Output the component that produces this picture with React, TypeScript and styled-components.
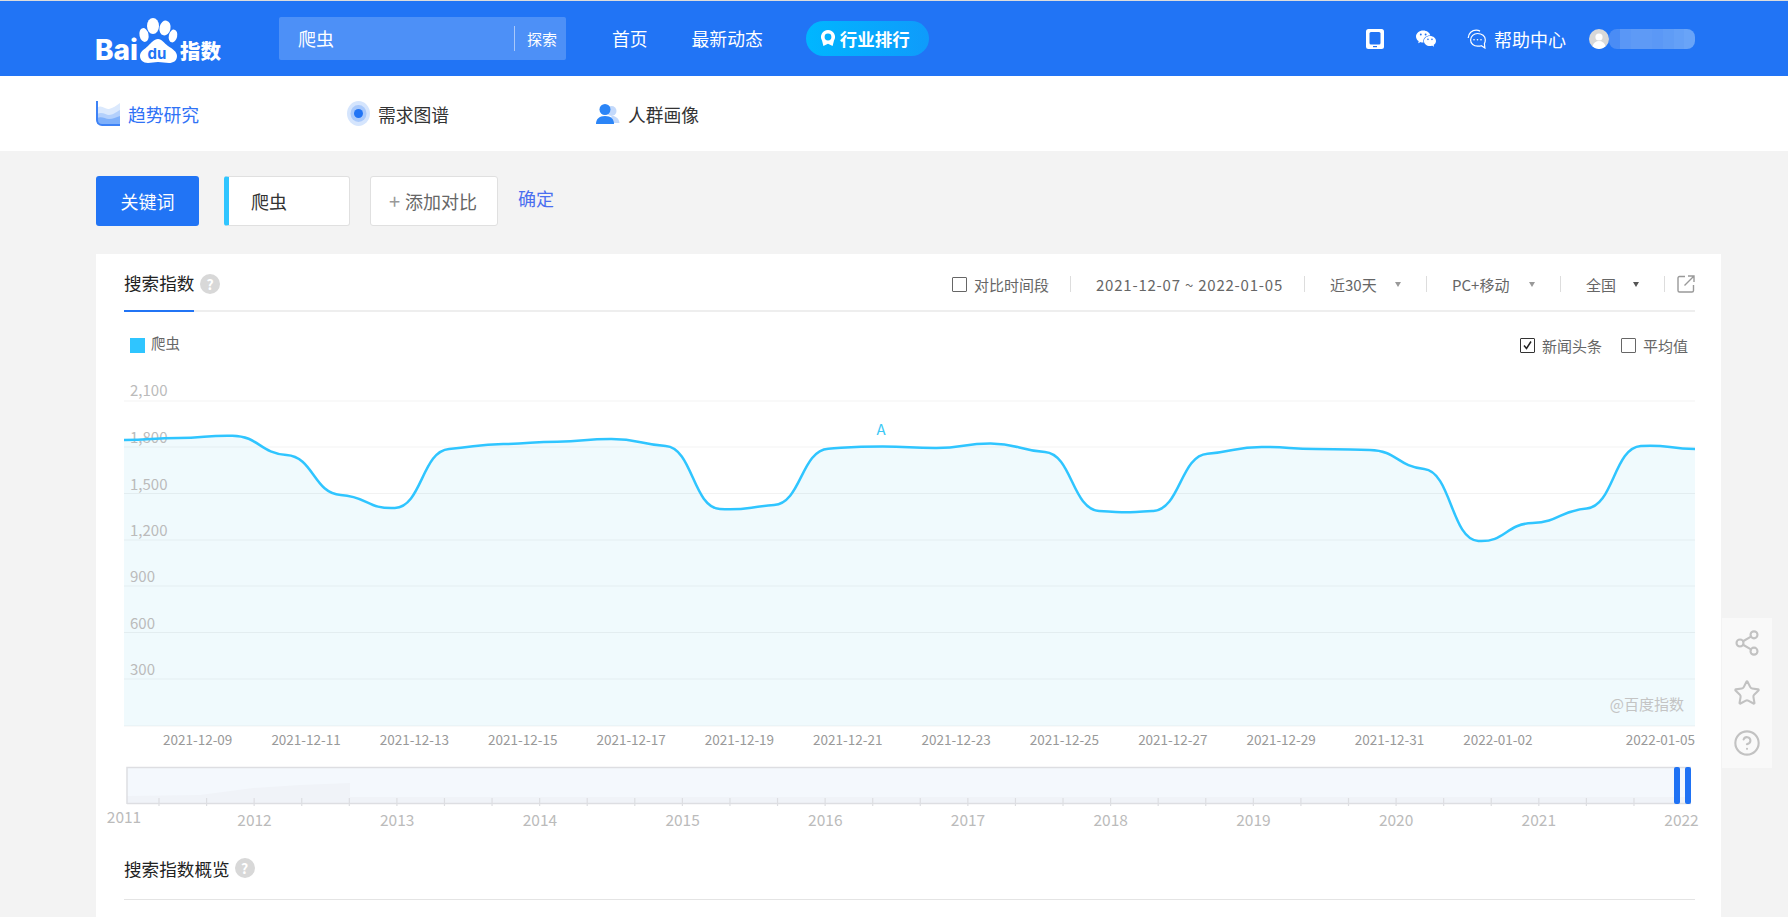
import React from "react";
import styled, { createGlobalStyle } from "styled-components";
import { Share2, Star, CircleHelp } from "lucide-react";
import { IoLogoWechat } from "react-icons/io5";

const BLUE = "#2174f5";
const FONT = `"Noto Sans CJK SC", "Noto Sans", sans-serif`;

const Global = createGlobalStyle`
  html, body { margin: 0; padding: 0; height: 100%; overflow: hidden; background: #f3f3f3; font-family: ${FONT}; }
  * { box-sizing: border-box; }
`;

const Page = styled.div`
  position: relative;
  height: 917px;
  display: flex;
  flex-direction: column;
  overflow: hidden;
`;
const Header = styled.header`
  height: 76px;
  border-top: 1px solid #dcdcdc;
  background: ${BLUE};
  padding: 0 93px 0 96px;
  display: flex;
  align-items: center;
  color: #fff;
  flex: none;
`;
const LogoSvg = styled.svg`
  width: 125px;
  height: 50px;
  align-self: flex-start;
  margin: 15px 58px 0 0;
  flex: none;
  overflow: visible;
`;
const SearchBox = styled.div`
  width: 287px;
  height: 43px;
  margin-top: -1px;
  background: #4d90f7;
  border-radius: 2px;
  display: flex;
  align-items: center;
  padding-left: 19px;
  font-size: 18px;
`;
const SearchText = styled.span`
  flex: 1;
`;
const SearchBtn = styled.span`
  width: 52px;
  height: 25px;
  border-left: 1px solid #a9c8fa;
  font-size: 15px;
  line-height: 25px;
  padding-left: 12px;
`;
const NavLink = styled.a<{ $ml: number }>`
  font-size: 17.8px;
  margin-left: ${(p) => p.$ml}px;
  white-space: nowrap;
  margin-top: -1px;
`;
const Pill = styled.div`
  width: 123px;
  height: 35px;
  margin: -1px 0 0 43px;
  border-radius: 18px;
  background: linear-gradient(90deg, #00b6ff, #0f9bfb);
  display: flex;
  align-items: center;
  padding-left: 13px;
  gap: 3px;
  font-size: 17.5px;
  font-weight: 700;
  white-space: nowrap;
`;
const HeaderRight = styled.div`
  margin-left: auto;
  display: flex;
  align-items: center;
  height: 100%;
`;
const IconSlot = styled.span<{ $w: number; $mr: number }>`
  width: ${(p) => p.$w}px;
  margin-right: ${(p) => p.$mr}px;
  display: flex;
  justify-content: center;
  flex: none;
`;
const HelpText = styled.span`
  font-size: 18px;
  margin-right: 23px;
  white-space: nowrap;
`;
const Blur = styled.div`
  display: flex;
  height: 20px;
  width: 86px;
  border-radius: 8px;
  overflow: hidden;
  filter: blur(0.6px);
`;
const BlurCell = styled.span<{ $c: string }>`
  flex: 1;
  background: ${(p) => p.$c};
`;

const SubNav = styled.nav`
  height: 75px;
  background: #fff;
  padding-left: 96px;
  display: flex;
  align-items: center;
  flex: none;
`;
const SubItem = styled.a<{ $w: number; $active?: boolean }>`
  width: ${(p) => p.$w}px;
  display: flex;
  align-items: center;
  font-size: 17.8px;
  color: ${(p) => (p.$active ? "#3072f6" : "#333")};
  gap: 8px;
`;

const Main = styled.main`
  flex: 1;
  min-height: 0;
  padding: 25px 67px 0 96px;
  display: flex;
  flex-direction: column;
`;
const KeywordRow = styled.div`
  height: 50px;
  display: flex;
  align-items: flex-start;
  flex: none;
  margin-bottom: 28px;
`;
const KeywordBtn = styled.div`
  width: 103px;
  height: 50px;
  background: ${BLUE};
  color: #fff;
  border-radius: 3px;
  font-size: 18px;
  display: flex;
  align-items: center;
  justify-content: center;
  margin-right: 25px;
`;
const KeywordTag = styled.div`
  width: 126px;
  height: 50px;
  background: #fff;
  border: 1px solid #e0e0e0;
  border-left: 5px solid #2fc5ff;
  border-radius: 3px;
  font-size: 18px;
  color: #333;
  display: flex;
  align-items: center;
  padding-left: 22px;
  margin-right: 20px;
`;
const AddBtn = styled.div`
  width: 128px;
  height: 50px;
  background: #fff;
  border: 1px solid #e0e0e0;
  border-radius: 3px;
  font-size: 18px;
  color: #666;
  display: flex;
  align-items: center;
  padding-left: 18px;
  gap: 5px;
  margin-right: 20px;
`;
const Plus = styled.span`
  color: #999;
  font-size: 20px;
  line-height: 1;
`;
const Confirm = styled.a`
  font-size: 18px;
  color: #4a6ff0;
  line-height: 45px;
`;

const Card = styled.section`
  flex: 1;
  background: #fff;
  padding: 0 26px 0 28px;
  min-height: 0;
`;
const CardHead = styled.div`
  height: 58px;
  border-bottom: 2px solid #eeeeee;
  display: flex;
  align-items: stretch;
`;
const Tab = styled.div`
  height: 58px;
  width: 70px;
  border-bottom: 2px solid ${BLUE};
  font-size: 17.6px;
  color: #222;
  display: flex;
  align-items: center;
  white-space: nowrap;
  padding-top: 1px;
  margin-right: 6px;
`;
const QMark = styled.span`
  width: 20px;
  height: 20px;
  border-radius: 50%;
  background: #d8d8d8;
  color: #fff;
  font-size: 14px;
  font-weight: 700;
  display: inline-flex;
  align-items: center;
  justify-content: center;
  flex: none;
`;
const TabHelp = styled.div`
  display: flex;
  align-items: center;
  padding-top: 3px;
`;
const Filters = styled.div`
  margin-left: auto;
  display: flex;
  align-items: center;
  font-size: 15px;
  color: #666;
  padding-top: 4px;
  white-space: nowrap;
`;
const Check = styled.span<{ $on?: boolean }>`
  width: 15px;
  height: 15px;
  border: 1px solid ${(p) => (p.$on ? "#333" : "#666")};
  border-radius: 1px;
  display: inline-flex;
  align-items: center;
  justify-content: center;
  flex: none;
  margin-right: 7px;
  background: #fff;
`;
const FilterText = styled.span<{ $w: number }>`
  width: ${(p) => p.$w}px;
  flex: none;
`;
const DateText = styled(FilterText)`
  letter-spacing: 0.78px;
`;
const Sep = styled.span<{ $mr?: number }>`
  width: 1px;
  height: 16px;
  background: #dddddd;
  margin: 0 ${(p) => p.$mr ?? 25}px 0 20px;
  flex: none;
`;
const Caret = styled.span<{ $dark?: boolean }>`
  width: 0;
  height: 0;
  border-left: 3.5px solid transparent;
  border-right: 3.5px solid transparent;
  border-top: 5px solid ${(p) => (p.$dark ? "#555" : "#999")};
  margin: 0 5px 0 16px;
  flex: none;
`;
const LegendRow = styled.div`
  height: 68px;
  padding: 26px 7px 0 6px;
  display: flex;
  align-items: flex-start;
  justify-content: space-between;
  font-size: 15px;
  color: #666;
`;
const LegendKey = styled.div`
  display: flex;
  align-items: center;
  height: 15px;
  gap: 6px;
  font-size: 14.5px;
`;
const LegendText = styled.span`
  margin-top: -6px;
`;
const Swatch = styled.span`
  width: 15px;
  height: 15px;
  background: #2fc5ff;
`;
const Toggles = styled.div`
  display: flex;
  align-items: center;
  height: 15px;
  margin-top: 0;
`;
const ToggleText = styled.span<{ $mr: number }>`
  margin-right: ${(p) => p.$mr}px;
  white-space: nowrap;
  margin-top: -1px;
`;
const ChartSvg = styled.svg`
  display: block;
  width: 1571px;
  height: 370px;
  overflow: visible;
  font-family: ${FONT};
`;
const NavSvg = styled.svg`
  display: block;
  width: 1571px;
  height: 85px;
  overflow: visible;
  font-family: ${FONT};
`;
const OverviewHead = styled.div`
  height: 65px;
  border-bottom: 1px solid #e4e4e4;
  display: flex;
  align-items: center;
  gap: 5px;
  font-size: 17.6px;
  color: #222;
  padding-top: 2px;
`;
const SideRail = styled.aside`
  position: absolute;
  left: 1722px;
  top: 618px;
  width: 50px;
  height: 150px;
  background: #f9f9f9;
  color: #c2c2c2;
  display: flex;
  flex-direction: column;
  align-items: center;
  justify-content: space-around;
`;

const ys = [440,438,435.7,455,495,508,449,444,441.7,439,446,509,505,448.7,446.5,448,443.5,452,511,511,453.7,447,449,450,469,541,523,508.5,446,449];
const X0 = 124;
const DX = (1695 - 124) / 29;
const xAt = (i: number) => X0 + DX * i;

function curvePath() {
  const slope = (i: number) => {
    const a = ys[Math.max(0, i - 1)];
    const b = ys[Math.min(ys.length - 1, i + 1)];
    return ((b - a) / (2 * DX)) * 0.12;
  };
  const k = DX * 0.5;
  let d = `M${xAt(0)} ${ys[0]}`;
  for (let i = 0; i < ys.length - 1; i++) {
    d += ` C${xAt(i) + k} ${ys[i] + slope(i) * k} ${xAt(i + 1) - k} ${ys[i + 1] - slope(i + 1) * k} ${xAt(i + 1)} ${ys[i + 1]}`;
  }
  return d;
}
const LINE = curvePath();
const AREA = `${LINE} L1695 726 L124 726 Z`;

const gridY = [401, 447, 493.5, 540, 586, 632.5, 679, 726];
const yLabels: [string, number][] = [["2,100", 396], ["1,800", 443], ["1,500", 490], ["1,200", 536], ["900", 582], ["600", 629], ["300", 675]];
const xLabels = ["2021-12-09","2021-12-11","2021-12-13","2021-12-15","2021-12-17","2021-12-19","2021-12-21","2021-12-23","2021-12-25","2021-12-27","2021-12-29","2021-12-31","2022-01-02"];
const years = Array.from({ length: 11 }, (_, i) => 2012 + i);
const blurCells = ["#4a8cf5","#5a97f6","#5e9af6","#5e9af6","#5b98f6","#5f9cf6","#64a0f7","#69a4f8"];

function Logo() {
  return (
    <LogoSvg viewBox="96 16 125 50">
      <g fill="#fff">
        <text x="95" y="60" fontFamily="Inter, sans-serif" fontWeight={800} fontSize="28">Bai</text>
        <ellipse cx="153" cy="26" rx="6" ry="8" />
        <ellipse cx="165" cy="28" rx="5.5" ry="7.5" transform="rotate(12 165 28)" />
        <ellipse cx="144" cy="35" rx="4.5" ry="7" transform="rotate(-12 144 35)" />
        <ellipse cx="173" cy="36" rx="4.2" ry="6.5" transform="rotate(12 173 36)" />
        <path d="M158 39c4 0 6 4 10 7 5 3 9 6 9 10 0 5-4 7-8 7-4 0-7-1-11-1s-6 1-10 1c-5 0-8-3-8-7 0-5 5-7 8-10 3-3 6-7 10-7z" />
        <text x="180" y="59" fontFamily={FONT} fontWeight={900} fontSize="20.5">指数</text>
      </g>
      <text x="147.500" y="59" fill={BLUE} fontFamily="Inter, sans-serif" fontWeight={700} fontSize="15">du</text>
    </LogoSvg>
  );
}

function HelpChat() {
  return (
    <svg width="20" height="20" viewBox="0 0 20 20" fill="none" stroke="#fff" strokeWidth="1.2">
      <path d="M10.500 4.500c4.600 0 7.800 2.600 7.800 6.300 0 1.600-.4 3-.9 3.800l.5 4.400-3.500-2.300c-1.200.5-2.400.5-3.900.5-3.600 0-6.900-2.400-6.900-6.300 0-3.600 3.200-6.400 6.900-6.400z" />
      <path d="M1.200 9C1.400 4.200 5 1.200 9.200 1.200c1.400 0 2.700.3 3.800.9" />
      <circle cx="7" cy="10.800" r=".8" fill="#fff" stroke="none" />
      <circle cx="10.500" cy="10.800" r=".8" fill="#fff" stroke="none" />
      <circle cx="14" cy="10.800" r=".8" fill="#fff" stroke="none" />
    </svg>
  );
}

function Phone() {
  return (
    <svg width="18" height="20" viewBox="0 0 18 20">
      <rect x="0" y="0" width="18" height="20" rx="2.500" fill="#fff" />
      <rect x="3.500" y="3" width="11" height="12.500" rx="1.500" fill={BLUE} />
      <rect x="7" y="17" width="4" height="1.200" fill={BLUE} />
    </svg>
  );
}

function Avatar() {
  return (
    <svg width="20" height="20" viewBox="0 0 20 20">
      <circle cx="10" cy="10" r="10" fill="#d8d8d8" />
      <circle cx="10" cy="8" r="3.600" fill="#fff" />
      <path d="M3.500 17.500c.8-3.600 3.400-5.500 6.500-5.500s5.700 1.900 6.500 5.500A10 10 0 0 1 3.500 17.500z" fill="#fff" />
    </svg>
  );
}

function Ribbon() {
  return (
    <svg width="18" height="18" viewBox="0 0 18 18" fill="#fff">
      <path fillRule="evenodd" d="M9 1a7 7 0 0 1 6 10.600L13.600 17 9 14.800 4.400 17 3 11.600A7 7 0 0 1 9 1zm0 3.600a3.400 3.400 0 1 0 0 6.800 3.400 3.400 0 0 0 0-6.800z" />
    </svg>
  );
}

function TrendIcon() {
  return (
    <svg width="24" height="25" viewBox="0 0 24 25">
      <path d="M1 7c5-4 8 2 12 1 4-1 7-3 11-6v20H1z" fill="#dbe9fd" />
      <path d="M1 13c5-3 9 1 12 1 4 0 7-3 11-5v14H1z" fill="#b3d0fc" />
      <path d="M1 17c5-2 8 1 12 1 4 0 7-2 11-3v8H1z" fill="#7fb0fa" />
      <path d="M1 0v19a5 5 0 0 0 5 5h18" fill="none" stroke="#3d82f6" strokeWidth="2" />
    </svg>
  );
}
function RadarIcon() {
  return (
    <svg width="23" height="25" viewBox="0 0 23 25">
      <ellipse cx="11.500" cy="12.500" rx="11.500" ry="12.500" fill="#d5e5fd" />
      <ellipse cx="11.500" cy="12.500" rx="8" ry="8.500" fill="#a9c9fb" />
      <circle cx="11.500" cy="12.500" r="4.500" fill="#2174f5" />
    </svg>
  );
}
function PeopleIcon() {
  return (
    <svg width="24" height="22" viewBox="0 0 24 22">
      <circle cx="15.500" cy="8" r="5" fill="#c3d9fb" />
      <path d="M12 20c0-5 3-7 5-7s6 2 6.500 7z" fill="#c3d9fb" />
      <circle cx="9" cy="6.500" r="5.500" fill="#2b85f7" />
      <path d="M0 21c0-5 3-8 9-8s9 3 9 8z" fill="#2b85f7" />
    </svg>
  );
}
function ExportIcon() {
  return (
    <svg width="18" height="18" viewBox="0 0 18 18" fill="none" stroke="#999" strokeWidth="1.400">
      <path d="M8 1.500H2.500a1.500 1.500 0 0 0-1.500 1.500v12.500a1.500 1.500 0 0 0 1.500 1.500h12.500a1.500 1.500 0 0 0 1.500-1.500V10" />
      <path d="M7.500 10.500 16.500 1.500M11 1h6v6" />
    </svg>
  );
}
const CheckMark = () => (
  <svg width="11" height="11" viewBox="0 0 11 11" fill="none" stroke="#222" strokeWidth="1.500">
    <path d="M2 5.500 4.500 8.500 9 1.500" />
  </svg>
);

function Chart() {
  return (
    <ChartSvg viewBox="124 380 1571 370">
      <path d={AREA} fill="#f0fafd" />
      {gridY.map((y) => (
        <line key={y} x1="124" x2="1695" y1={y} y2={y} stroke="#000" strokeOpacity="0.05" strokeWidth="1" />
      ))}
      {yLabels.map(([t, y]) => (
        <text key={t} x="130" y={y} fontSize="15" fill="#bbbbbb">{t}</text>
      ))}
      <path d={LINE} fill="none" stroke="#2fc5ff" strokeWidth="2.500" />
      <text x="881" y="435" fontSize="15" fill="#3cc8f5" textAnchor="middle">A</text>
      <text x="1684" y="710" fontSize="15" fill="#c4c4c4" textAnchor="end">@百度指数</text>
      {xLabels.map((t, i) => (
        <text key={t} x={xAt(2 + i * 2)} y="745" fontSize="13.500" fill="#999999" textAnchor="end">{t}</text>
      ))}
      <text x="1695" y="745" fontSize="13.500" fill="#999999" textAnchor="end">2022-01-05</text>
    </ChartSvg>
  );
}

function Navigator() {
  const ticks = Array.from({ length: 32 }, (_, i) => 159 + i * 47.58);
  return (
    <NavSvg viewBox="124 750 1571 85">
      <rect x="127" y="767" width="1564" height="37" fill="#f4f8fd" />
      <rect x="127" y="797" width="1564" height="7" fill="#f0f3f8" />
      <path d="M127 804V796L200 795 253 788 300 785 350 783V804Z" fill="#f0f3f8" />
      <path d="M127 804V767.500H1691M127 803.500H1691" fill="none" stroke="#dddee2" strokeWidth="1.500" />
      {ticks.map((x) => (
        <line key={x} x1={x} x2={x} y1="798" y2="806" stroke="#dddee2" strokeWidth="1.200" />
      ))}
      <rect x="1674" y="767" width="6" height="37" rx="2" fill="#1f72f4" />
      <rect x="1685" y="767" width="6" height="37" rx="2" fill="#1f72f4" />
      <text x="124" y="823" fontSize="15.500" fill="#bbbbbb" textAnchor="middle">2011</text>
      {years.map((y, i) => (
        <text key={y} x={254.500 + i * 142.7} y="826" fontSize="15.500" fill="#bbbbbb" textAnchor="middle">{y}</text>
      ))}
    </NavSvg>
  );
}

export default function App() {
  return (
    <Page>
      <Global />
      <Header>
        <Logo />
        <SearchBox>
          <SearchText>爬虫</SearchText>
          <SearchBtn>探索</SearchBtn>
        </SearchBox>
        <NavLink $ml={46}>首页</NavLink>
        <NavLink $ml={44}>最新动态</NavLink>
        <Pill><Ribbon />行业排行</Pill>
        <HeaderRight>
          <IconSlot $w={18} $mr={32}><Phone /></IconSlot>
          <IconSlot $w={20} $mr={31}><IoLogoWechat size={21} color="#fff" /></IconSlot>
          <IconSlot $w={20} $mr={7}><HelpChat /></IconSlot>
          <HelpText>帮助中心</HelpText>
          <IconSlot $w={20} $mr={0}><Avatar /></IconSlot>
          <Blur>
            {blurCells.map((c, i) => <BlurCell key={i} $c={c} />)}
          </Blur>
        </HeaderRight>
      </Header>
      <SubNav>
        <SubItem $w={251} $active><TrendIcon />趋势研究</SubItem>
        <SubItem $w={249}><RadarIcon />需求图谱</SubItem>
        <SubItem $w={200}><PeopleIcon />人群画像</SubItem>
      </SubNav>
      <Main>
        <KeywordRow>
          <KeywordBtn>关键词</KeywordBtn>
          <KeywordTag>爬虫</KeywordTag>
          <AddBtn><Plus>+</Plus>添加对比</AddBtn>
          <Confirm>确定</Confirm>
        </KeywordRow>
        <Card>
          <CardHead>
            <Tab>搜索指数</Tab>
            <TabHelp><QMark>?</QMark></TabHelp>
            <Filters>
              <Check />
              <FilterText $w={76}>对比时间段</FilterText>
              <Sep />
              <DateText $w={188}>2021-12-07 ~ 2022-01-05</DateText>
              <Sep />
              <FilterText $w={49}>近30天</FilterText>
              <Caret />
              <Sep />
              <FilterText $w={61}>PC+移动</FilterText>
              <Caret />
              <Sep />
              <FilterText $w={31}>全国</FilterText>
              <Caret $dark />
              <Sep $mr={12} />
              <ExportIcon />
            </Filters>
          </CardHead>
          <LegendRow>
            <LegendKey><Swatch /><LegendText>爬虫</LegendText></LegendKey>
            <Toggles>
              <Check $on><CheckMark /></Check>
              <ToggleText $mr={19}>新闻头条</ToggleText>
              <Check />
              <ToggleText $mr={0}>平均值</ToggleText>
            </Toggles>
          </LegendRow>
          <Chart />
          <Navigator />
          <OverviewHead>搜索指数概览<QMark>?</QMark></OverviewHead>
        </Card>
      </Main>
      <SideRail>
        <Share2 size={28} strokeWidth={1.8} />
        <Star size={28} strokeWidth={1.8} />
        <CircleHelp size={28} strokeWidth={1.8} />
      </SideRail>
    </Page>
  );
}
